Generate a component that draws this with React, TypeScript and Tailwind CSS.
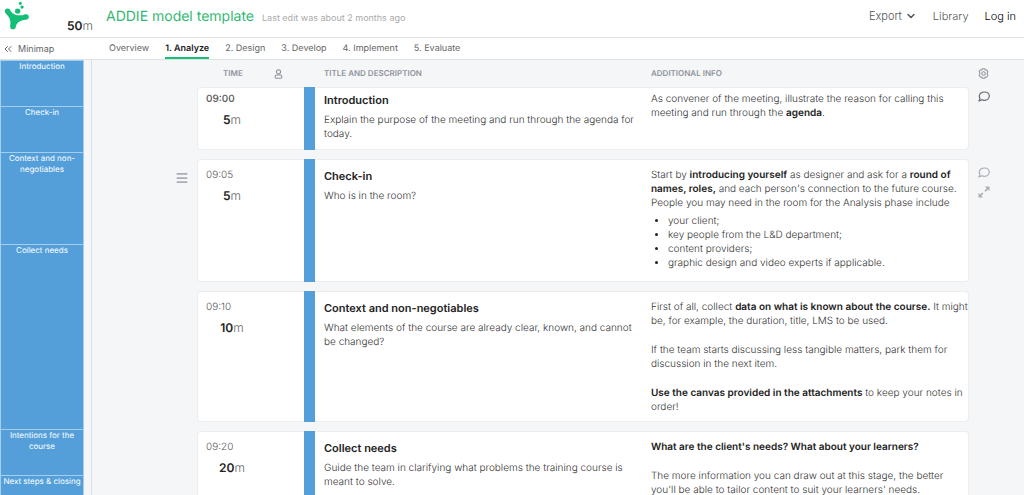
import React from "react";
import { ChevronDown, ChevronsLeft, Menu } from "lucide-react";
import clsx from "clsx";

interface Session {
  time: string;
  minutes: number;
  title: string;
  description: string;
  info: React.ReactNode;
}

const tabs = ["Overview", "1. Analyze", "2. Design", "3. Develop", "4. Implement", "5. Evaluate"];

const minimap = [
  { label: "Introduction", height: "h-[46px]" },
  { label: "Check-in", height: "h-[46px]" },
  { label: "Context and non-negotiables", height: "h-[92px]" },
  { label: "Collect needs", height: "h-[185px]" },
  { label: "Intentions for the course", height: "h-[46px]" },
  { label: "Next steps & closing", height: "h-[46px]" },
];

const sessions: Session[] = [
  {
    time: "09:00",
    minutes: 5,
    title: "Introduction",
    description: "Explain the purpose of the meeting and run through the agenda for today.",
    info: (
      <p>
        As convener of the meeting, illustrate the reason for calling this meeting and run through the <b>agenda</b>.
      </p>
    ),
  },
  {
    time: "09:05",
    minutes: 5,
    title: "Check-in",
    description: "Who is in the room?",
    info: (
      <>
        <p>
          Start by <b>introducing yourself</b> as designer and ask for a <b>round of names, roles,</b> and each
          person's connection to the future course.
          <br />
          People you may need in the room for the Analysis phase include
        </p>
        <ul className="list-disc pt-1 pb-1 pl-[17px] marker:text-[#222]">
          <li>your client;</li>
          <li>key people from the L&amp;D department;</li>
          <li>content providers;</li>
          <li>graphic design and video experts if applicable.</li>
        </ul>
      </>
    ),
  },
  {
    time: "09:10",
    minutes: 10,
    title: "Context and non-negotiables",
    description: "What elements of the course are already clear, known, and cannot be changed?",
    info: (
      <div className="flex flex-col gap-[15px]">
        <p>
          First of all, collect <b>data on what is known about the course.</b> It might be, for example, the duration,
          title, LMS to be used.
        </p>
        <p>If the team starts discussing less tangible matters, park them for discussion in the next item.</p>
        <p>
          <b>Use the canvas provided in the attachments</b> to keep your notes in order!
        </p>
      </div>
    ),
  },
  {
    time: "09:20",
    minutes: 20,
    title: "Collect needs",
    description: "Guide the team in clarifying what problems the training course is meant to solve.",
    info: (
      <div className="flex flex-col gap-[15px]">
        <p>
          <b>What are the client's needs? What about your learners?</b>
        </p>
        <p>
          The more information you can draw out at this stage, the better you'll be able to tailor content to suit your
          learners' needs.
        </p>
      </div>
    ),
  },
];

const Logo: React.FC = () => (
  <svg viewBox="12 4 76 86" className="h-[29px] w-[26px]" fill="#13bf76" aria-label="Home">
    <circle cx="60" cy="11" r="4.5" />
    <circle cx="65" cy="22" r="5" />
    <circle cx="52" cy="34" r="8" />
    <circle cx="22" cy="34" r="8" />
    <circle cx="77" cy="51" r="8" />
    <circle cx="38" cy="80" r="8" />
    <path d="M28 28Q33 43 50 46Q65 48 75 43L80 58Q64 60 55 66Q47 72 45 82L30 81Q33 67 28 56Q24 47 16 40z" />
  </svg>
);

const PersonIcon: React.FC = () => (
  <svg viewBox="0 0 10 12" className="h-[10px] w-[9px]" fill="none" stroke="currentColor" strokeWidth="1.3">
    <circle cx="5" cy="3.4" r="2.5" />
    <path d="M3 7.200H7Q9 7.200 9 9.200V10q0 1-1 1H2q-1 0-1-1V9.200Q1 7.200 3 7.200z" />
  </svg>
);

const CogIcon: React.FC = () => (
  <svg viewBox="0 0 12 12" className="size-[11px]" fill="none" stroke="currentColor" strokeWidth="1.1" strokeLinejoin="round">
    <path d="M4.700 .8h2.600l.5 1.300 1.400-.2 1.600 2.100-.8 1.200v1.600l.8 1.200-1.600 2.100-1.400-.2-.5 1.300H4.700l-.5-1.300-1.400.2L1.200 8l.8-1.200V5.200L1.200 4l1.600-2.100 1.400.2z" />
    <circle cx="6" cy="6" r="1.900" />
  </svg>
);

const CommentIcon: React.FC = () => (
  <svg viewBox="0 0 12 11" className="h-[11px] w-3" fill="none" stroke="currentColor" strokeWidth="1.200" strokeLinejoin="round">
    <path d="M6.400 1C9.300 1 11.300 2.800 11.300 5.100S9.300 9.300 6.400 9.300c-1 0-1.800-.2-2.500-.5C3.100 9.400 2 9.800.8 9.800c.7-.7 1.100-1.400 1.200-2.200C1.600 6.900 1.300 6 1.300 5.100 1.300 2.800 3.500 1 6.400 1z" />
  </svg>
);

const ExpandIcon: React.FC = () => (
  <svg viewBox="0 0 12 12" className="size-3" fill="currentColor">
    <path d="M7 .5h4.500V5L9.900 3.400 7.500 5.800l-1.100-1.100 2.300-2.300zM5 11.500H.5V7l1.600 1.600 2.200-2.200 1.100 1.100-2.200 2.300z" />
  </svg>
);

const Duration: React.FC<{ minutes: number }> = ({ minutes }) => (
  <>
    <span className="font-semibold text-[#222]">{minutes}</span>
    <span className="text-[#666]">m</span>
  </>
);

const SessionRow: React.FC<{ session: Session; index: number }> = ({ session, index }) => {
  const first = index === 0;
  const hovered = index === 1;
  const padding = first ? "pt-1 pb-2" : "pt-2 pb-[7px]";

  return (
    <tr className="align-top">
      <td className="pt-3 pr-2 text-right leading-none">
        {hovered && (
          <button type="button" aria-label="Move block" className="text-[#aaadb8]">
            <Menu size={14} strokeWidth={3} />
          </button>
        )}
      </td>
      <td className={clsx("rounded-l-sm border-y border-l border-[#ebedef] bg-white pl-2", padding)}>
        <div className={clsx("text-[#555]", first && "font-medium")}>{session.time}</div>
        <div className="w-[52px] pt-[6px] text-center text-xs leading-4">
          <Duration minutes={session.minutes} />
        </div>
      </td>
      <td className="bg-[#549fd9]" />
      <td className={clsx("border-y border-[#ebedef] bg-white pl-[9px]", padding)}>
        <h2 className="text-[11px] leading-4 font-semibold text-[#222]">{session.title}</h2>
        <p className="pt-[5px]">{session.description}</p>
      </td>
      <td
        className={clsx(
          "rounded-r-sm border-y border-r border-[#ebedef] bg-white pl-[9px] [&_b]:font-semibold [&_b]:text-[#222]",
          padding
        )}
      >
        {session.info}
      </td>
      <td className="pt-1 pl-[9px]">
        <div className={clsx("flex flex-col gap-2", first ? "text-[#666973]" : "pt-1 text-[#abaeb9]")}>
          {index < 2 && (
            <button type="button" aria-label="Comments" className="w-3">
              <CommentIcon />
            </button>
          )}
          {hovered && (
            <button type="button" aria-label="Expand" className="w-3">
              <ExpandIcon />
            </button>
          )}
        </div>
      </td>
    </tr>
  );
};

const App: React.FC = () => {
  return (
    <div className="flex h-screen flex-col overflow-hidden bg-[#f4f6f8] font-['Inter',sans-serif] text-[10px] leading-[14px] font-light text-[#333] [text-rendering:geometricPrecision]">
      <header className="flex h-[38px] shrink-0 items-start border-b border-[#e0e1e3] bg-white pr-2 pl-1">
        <a href="#" className="pt-px">
          <Logo />
        </a>
        <div className="w-[63px] pt-[18px] text-right text-xs leading-4">
          <Duration minutes={50} />
        </div>
        <div className="ml-[13px] flex grow items-baseline gap-2 pt-[7px]">
          <h1 className="text-[14px] leading-5 font-normal text-[#32b872]">ADDIE model template</h1>
          <span className="text-[9px] font-normal text-[#aaa]">Last edit was about 2 months ago</span>
        </div>
        <nav className="flex gap-4 pt-2 text-[11px] leading-4 text-[#555]">
          <button type="button" className="flex items-center gap-[3px]">
            Export
            <ChevronDown size={12} strokeWidth={3} />
          </button>
          <a href="#">Library</a>
          <a href="#" className="text-black">Log in</a>
        </nav>
      </header>

      <div className="flex h-[22px] shrink-0 border-b border-[#e0e1e3] bg-white text-[9px] font-normal">
        <button type="button" className="flex w-[109px] items-center gap-1 pl-[2px] text-[#666]">
          <ChevronsLeft size={12} strokeWidth={2} />
          Minimap
        </button>
        <nav className="flex gap-4">
          {tabs.map((tab, i) => (
            <a
              key={tab}
              href="#"
              className={clsx(
                "border-b-2 pt-1",
                i === 1 ? "border-[#13bf76] font-semibold text-[#222]" : "border-transparent text-[#666]"
              )}
            >
              {tab}
            </a>
          ))}
        </nav>
      </div>

      <div className="flex min-h-0 grow">
        <aside className="w-[92px] shrink-0 overflow-hidden border-r border-[#dcdee1] pr-[7px]">
          {minimap.map((block) => (
            <div
              key={block.label}
              className={clsx(
                "border-x border-t border-[#a5cdec] bg-[#549fd9] text-center text-[8px] leading-[11px] font-normal text-white",
                block.height
              )}
            >
              {block.label}
            </div>
          ))}
        </aside>

        <main className="min-w-0 grow overflow-hidden">
          <table className="w-full table-fixed border-separate border-spacing-x-0 border-spacing-y-[9px]">
            <colgroup>
              <col className="w-[105px]" />
              <col className="w-[107px]" />
              <col className="w-[11px]" />
              <col />
              <col />
              <col className="w-[55px]" />
            </colgroup>
            <thead>
              <tr className="text-left text-[8px] leading-[9px] text-[#8f929b]">
                <th />
                <th className="font-semibold">
                  <div className="flex h-[9px] items-center gap-[31px] pl-[26px]">
                    TIME
                    <PersonIcon />
                  </div>
                </th>
                <th />
                <th className="pl-[9px] font-semibold">TITLE AND DESCRIPTION</th>
                <th className="pl-[9px] font-semibold">ADDITIONAL INFO</th>
                <th className="pl-[9px]">
                  <button type="button" aria-label="Columns" className="flex h-[9px] items-center">
                    <CogIcon />
                  </button>
                </th>
              </tr>
            </thead>
            <tbody>
              {sessions.map((session, i) => (
                <SessionRow key={session.time} session={session} index={i} />
              ))}
            </tbody>
          </table>
        </main>
      </div>
    </div>
  );
};

export default App;
